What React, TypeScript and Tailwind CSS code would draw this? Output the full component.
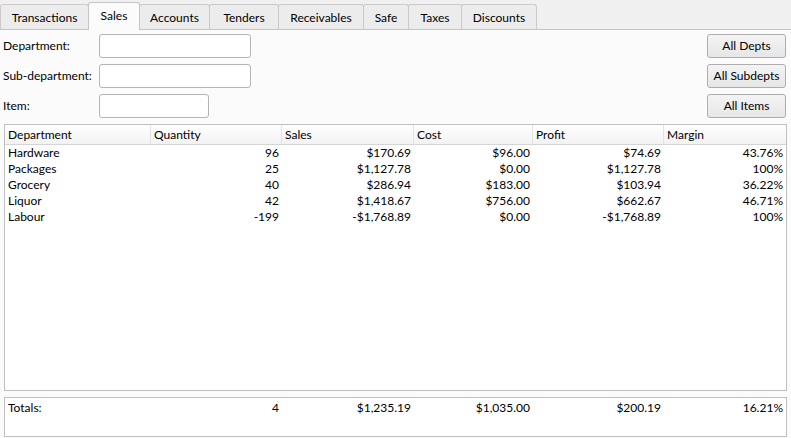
import React from "react";

const TABS = [
  { label: "Transactions", w: "w-[89px]" },
  { label: "Sales", w: "w-[52px]", active: true },
  { label: "Accounts", w: "w-[71px]" },
  { label: "Tenders", w: "w-[70px]" },
  { label: "Receivables", w: "w-[86px]" },
  { label: "Safe", w: "w-[46px]" },
  { label: "Taxes", w: "w-[54px]" },
  { label: "Discounts", w: "w-[76px]" },
];

const COLS = ["Department", "Quantity", "Sales", "Cost", "Profit", "Margin"];

const ROWS = [
  ["Hardware", "96", "$170.69", "$96.00", "$74.69", "43.76%"],
  ["Packages", "25", "$1,127.78", "$0.00", "$1,127.78", "100%"],
  ["Grocery", "40", "$286.94", "$183.00", "$103.94", "36.22%"],
  ["Liquor", "42", "$1,418.67", "$756.00", "$662.67", "46.71%"],
  ["Labour", "-199", "-$1,768.89", "$0.00", "-$1,768.89", "100%"],
];

const TOTALS = ["Totals:", "4", "$1,235.19", "$1,035.00", "$200.19", "16.21%"];

const GRID = "grid grid-cols-[146px_131px_132px_119px_131px_122px]";

function Field({ label, width, button }: { label: string; width: string; button: string }) {
  return (
    <div className="flex h-[24px] items-center">
      <span className="w-[96px]">{label}</span>
      <div className={`h-[24px] ${width} rounded-[3px] border border-[#b4b4b4] bg-white`} />
      <div className="flex-1" />
      <button className="h-[24px] w-[79px] rounded-[3px] border border-[#adadad] bg-gradient-to-b from-[#f4f4f4] to-[#e6e6e6] text-black">
        {button}
      </button>
    </div>
  );
}

export default function App() {
  return (
    <div className="flex h-[438px] w-full flex-col bg-[#f0f0f0] text-[12px] leading-[16px] text-black [font-family:Lato,'Liberation_Sans',sans-serif]">
      <div className="flex h-[30px] items-end border-b border-[#c5c5c5]">
        {TABS.map((t, i) =>
          t.active ? (
            <div
              key={t.label}
              className={`relative z-10 -mb-px -ml-px flex h-[28px] ${t.w} items-start justify-center rounded-t-[3px] border border-b-0 border-[#c5c5c5] bg-[#fbfbfb] pt-[5px]`}
            >
              {t.label}
            </div>
          ) : (
            <div
              key={t.label}
              className={`flex h-[25px] ${t.w} ${i === 0 ? "" : "-ml-px"} items-start justify-center rounded-t-[3px] border border-b-0 border-[#cbcbcb] bg-[#ececec] pt-[5px]`}
            >
              {t.label}
            </div>
          ),
        )}
      </div>

      <div className="flex flex-1 flex-col bg-[#fbfbfb]">
        <div className="flex flex-col gap-[6px] pl-[3px] pr-[5px] pt-[4px]">
          <Field label="Department:" width="w-[152px]" button="All Depts" />
          <Field label="Sub-department:" width="w-[152px]" button="All Subdepts" />
          <Field label="Item:" width="w-[110px]" button="All Items" />
        </div>

        <div className="mx-[4px] mt-[6px] h-[267px] border border-[#bfbfbf] bg-white">
          <div className={`${GRID} h-[20px] border-b border-[#d5d5d5] bg-gradient-to-b from-white to-[#f2f2f2]`}>
            {COLS.map((c, i) => (
              <div
                key={c}
                className={`flex items-center pl-[3px] ${i < COLS.length - 1 ? "border-r border-[#e3e3e3]" : ""}`}
              >
                {c}
              </div>
            ))}
          </div>
          {ROWS.map((r) => (
            <div key={r[0]} className={`${GRID} h-[16px]`}>
              {r.map((v, i) => (
                <div key={i} className={i === 0 ? "pl-[3px]" : "pr-[3px] text-right"}>
                  {v}
                </div>
              ))}
            </div>
          ))}
        </div>

        <div className="mx-[4px] mt-[6px] h-[40px] border border-[#bfbfbf] bg-white pt-[2px]">
          <div className={`${GRID} h-[16px]`}>
            {TOTALS.map((v, i) => (
              <div key={i} className={i === 0 ? "pl-[3px]" : "pr-[3px] text-right"}>
                {v}
              </div>
            ))}
          </div>
        </div>
      </div>
    </div>
  );
}
